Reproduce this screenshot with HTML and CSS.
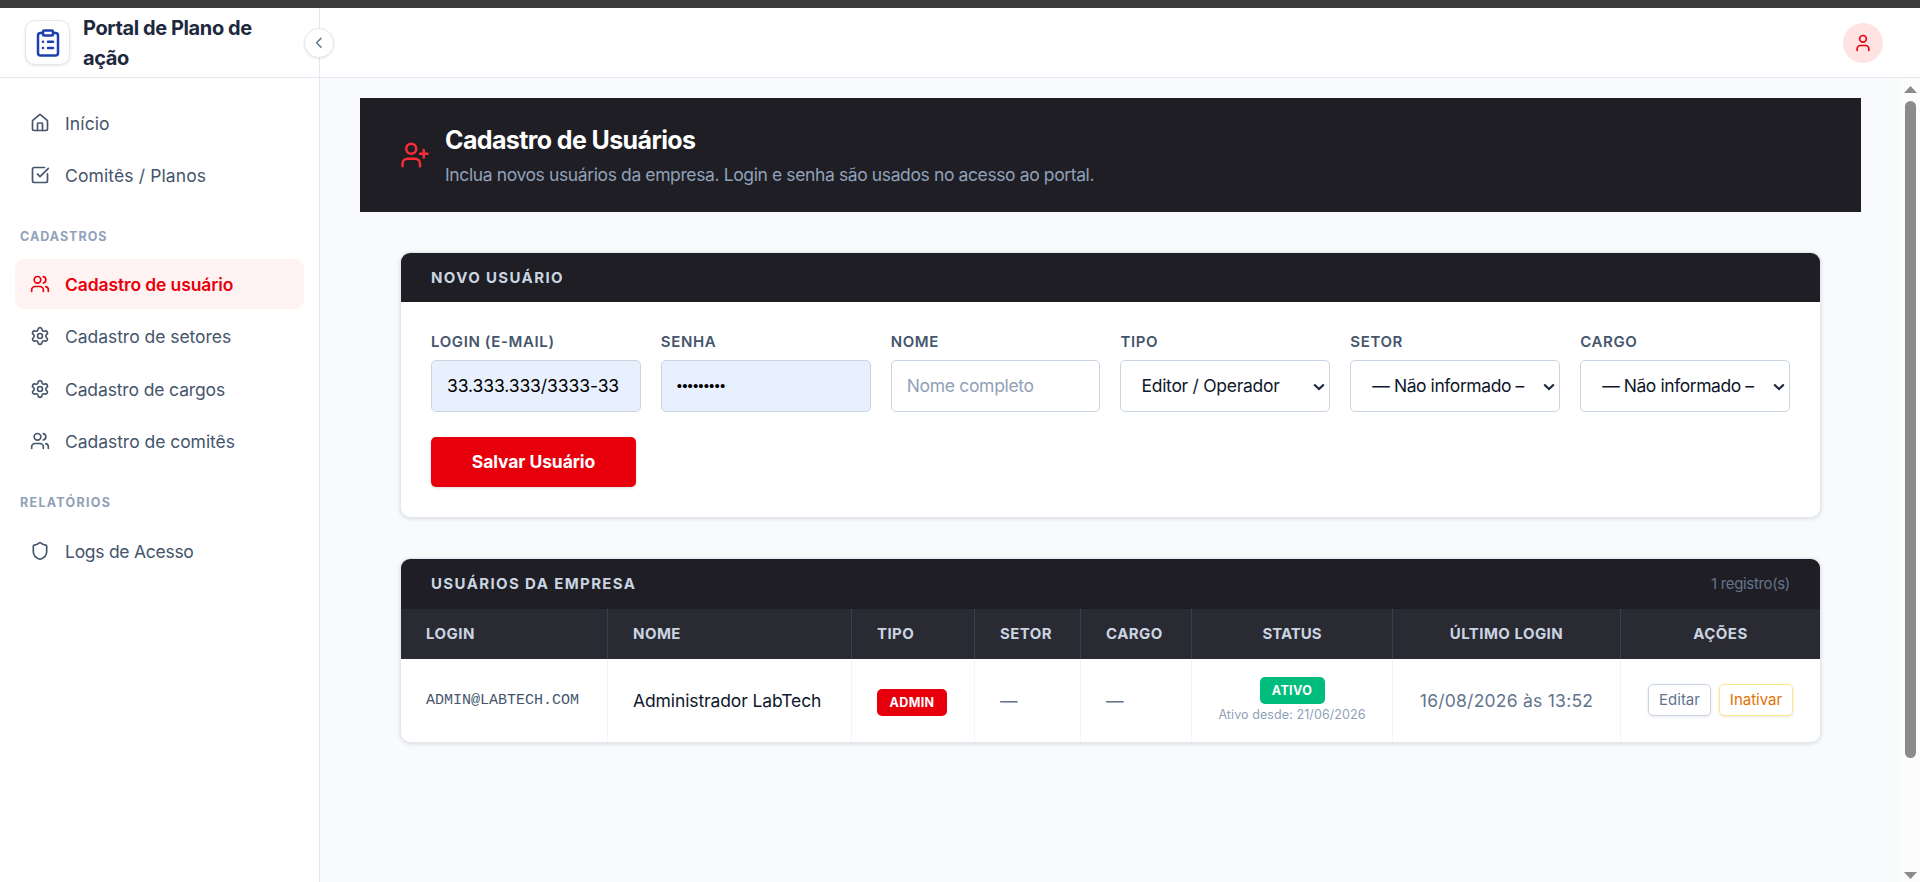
FILE: index.html
```html
<!DOCTYPE html>
<html lang="pt-BR">
<head>
<meta charset="utf-8">
<title>Portal de Plano de ação</title>
<link rel="stylesheet" href="styles.css">
</head>
<body>
<svg class="sprite" aria-hidden="true">
  <symbol id="i-clipboard" viewBox="0 0 24 24"><rect x="8" y="2" width="8" height="4" rx="1"/><path d="M16 4h2a2 2 0 0 1 2 2v14a2 2 0 0 1-2 2H6a2 2 0 0 1-2-2V6a2 2 0 0 1 2-2h2"/><path d="M12 11h4M12 16h4M8 11h.01M8 16h.01"/></symbol>
  <symbol id="i-home" viewBox="0 0 24 24"><path d="M15 21v-8a1 1 0 0 0-1-1h-4a1 1 0 0 0-1 1v8"/><path d="M3 10a2 2 0 0 1 .709-1.528l7-5.999a2 2 0 0 1 2.582 0l7 5.999A2 2 0 0 1 21 10v9a2 2 0 0 1-2 2H5a2 2 0 0 1-2-2z"/></symbol>
  <symbol id="i-check" viewBox="0 0 24 24"><path d="M21 10.5V19a2 2 0 0 1-2 2H5a2 2 0 0 1-2-2V5a2 2 0 0 1 2-2h12.5"/><path d="m9 11 3 3L22 4"/></symbol>
  <symbol id="i-users" viewBox="0 0 24 24"><path d="M16 21v-2a4 4 0 0 0-4-4H6a4 4 0 0 0-4 4v2"/><circle cx="9" cy="7" r="4"/><path d="M22 21v-2a4 4 0 0 0-3-3.87M16 3.13a4 4 0 0 1 0 7.75"/></symbol>
  <symbol id="i-gear" viewBox="0 0 24 24"><path d="M9.671 4.136a2.34 2.34 0 0 1 4.659 0 2.34 2.34 0 0 0 3.319 1.915 2.34 2.34 0 0 1 2.33 4.033 2.34 2.34 0 0 0 0 3.831 2.34 2.34 0 0 1-2.33 4.033 2.34 2.34 0 0 0-3.319 1.915 2.34 2.34 0 0 1-4.659 0 2.34 2.34 0 0 0-3.32-1.915 2.34 2.34 0 0 1-2.33-4.033 2.34 2.34 0 0 0 0-3.831A2.34 2.34 0 0 1 6.35 6.051a2.34 2.34 0 0 0 3.319-1.915"/><circle cx="12" cy="12" r="3"/></symbol>
  <symbol id="i-shield" viewBox="0 0 24 24"><path d="M20 13c0 5-3.5 7.5-7.66 8.95a1 1 0 0 1-.67-.01C7.5 20.5 4 18 4 13V6a1 1 0 0 1 1-1c2 0 4.5-1.2 6.24-2.72a1.17 1.17 0 0 1 1.52 0C14.51 3.81 17 5 19 5a1 1 0 0 1 1 1z"/></symbol>
  <symbol id="i-user" viewBox="0 0 24 24"><path d="M19 21v-2a4 4 0 0 0-4-4H9a4 4 0 0 0-4 4v2"/><circle cx="12" cy="7" r="4"/></symbol>
  <symbol id="i-user-plus" viewBox="0 0 24 24"><path d="M16 21v-2a4 4 0 0 0-4-4H6a4 4 0 0 0-4 4v2"/><circle cx="9" cy="7" r="4"/><path d="M19 8v6M22 11h-6"/></symbol>
  <symbol id="i-left" viewBox="0 0 24 24"><path d="m15 18-6-6 6-6"/></symbol>
  <symbol id="i-down" viewBox="0 0 12 8"><path d="m1.2 1.5 4.8 4.6 4.8-4.6"/></symbol>
</svg>
<div class="strip"></div>
<div class="app">
  <aside class="sidebar">
    <div class="brand">
      <span class="brand-logo"><svg class="icon icon-lg"><use href="#i-clipboard"/></svg></span>
      <h1 class="brand-name">Portal de Plano de ação</h1>
      <button class="collapse" aria-label="Recolher"><svg class="icon icon-xs"><use href="#i-left"/></svg></button>
    </div>
    <nav class="nav">
      <a class="nav-item wide"><svg class="icon"><use href="#i-home"/></svg>Início</a>
      <a class="nav-item wide"><svg class="icon"><use href="#i-check"/></svg>Comitês / Planos</a>
      <h2 class="nav-title">CADASTROS</h2>
      <a class="nav-item active"><svg class="icon"><use href="#i-users"/></svg>Cadastro de usuário</a>
      <a class="nav-item"><svg class="icon"><use href="#i-gear"/></svg>Cadastro de setores</a>
      <a class="nav-item snug"><svg class="icon"><use href="#i-gear"/></svg>Cadastro de cargos</a>
      <a class="nav-item"><svg class="icon"><use href="#i-users"/></svg>Cadastro de comitês</a>
      <h2 class="nav-title loose">RELATÓRIOS</h2>
      <a class="nav-item tight"><svg class="icon"><use href="#i-shield"/></svg>Logs de Acesso</a>
    </nav>
  </aside>
  <div class="main">
    <header class="topbar"><span class="avatar"><svg class="icon"><use href="#i-user"/></svg></span></header>
    <div class="viewport">
      <main class="content">
        <section class="banner">
          <svg class="icon icon-lg"><use href="#i-user-plus"/></svg>
          <div>
            <h2 class="banner-title">Cadastro de Usuários</h2>
            <p class="banner-text">Inclua novos usuários da empresa. Login e senha são usados no acesso ao portal.</p>
          </div>
        </section>

        <section class="card form-card">
          <header class="card-head"><h3 class="card-title">NOVO USUÁRIO</h3></header>
          <form class="form">
            <div class="fields">
              <label class="field"><span class="label">LOGIN (E-MAIL)</span><input class="control filled" type="text" value="33.333.333/3333-33"></label>
              <label class="field"><span class="label">SENHA</span><span class="control filled dots">•••••••••</span></label>
              <label class="field"><span class="label">NOME</span><input class="control" type="text" placeholder="Nome completo"></label>
              <label class="field"><span class="label">TIPO</span><span class="control select"><span class="select-value">Editor / Operador</span><svg class="chevron"><use href="#i-down"/></svg></span></label>
              <label class="field"><span class="label">SETOR</span><span class="control select"><span class="select-value none">— Não informado –</span><svg class="chevron"><use href="#i-down"/></svg></span></label>
              <label class="field"><span class="label">CARGO</span><span class="control select"><span class="select-value none">— Não informado –</span><svg class="chevron"><use href="#i-down"/></svg></span></label>
            </div>
            <button class="save" type="button">Salvar Usuário</button>
          </form>
        </section>

        <section class="card">
          <header class="card-head list-head"><h3 class="card-title">USUÁRIOS DA EMPRESA</h3><span class="count">1 registro(s)</span></header>
          <table class="table">
            <colgroup><col class="c-login"><col class="c-nome"><col class="c-tipo"><col class="c-setor"><col class="c-cargo"><col class="c-status"><col class="c-ultimo"><col class="c-acoes"></colgroup>
            <thead><tr><th>LOGIN</th><th>NOME</th><th>TIPO</th><th>SETOR</th><th>CARGO</th><th class="center flat">STATUS</th><th class="center">ÚLTIMO LOGIN</th><th class="center">AÇÕES</th></tr></thead>
            <tbody><tr>
              <td class="mono">ADMIN@LABTECH.COM</td>
              <td class="name">Administrador LabTech</td>
              <td class="type"><span class="badge admin">ADMIN</span></td>
              <td>—</td>
              <td>—</td>
              <td class="center"><div class="status"><span class="badge ok">ATIVO</span><span class="since">Ativo desde: 21/06/2026</span></div></td>
              <td class="center date">16/08/2026 às 13:52</td>
              <td class="center"><div class="actions"><button class="btn">Editar</button><button class="btn warn">Inativar</button></div></td>
            </tr></tbody>
          </table>
        </section>
      </main>
      <div class="scrollbar"><span class="arrow up"></span><span class="thumb"></span><span class="arrow down"></span></div>
    </div>
  </div>
</div>
</body>
</html>
```

FILE: styles.css
```css
*{box-sizing:border-box;margin:0;padding:0}
body{height:882px;overflow:hidden;display:flex;flex-direction:column;font-family:Inter,"Liberation Sans",sans-serif;font-size:17.5px;color:#0f172b;background:#f8fafc}
button,input{font:inherit;color:inherit}
.sprite{display:none}
.icon{width:20px;height:20px;flex:none;fill:none;stroke:currentColor;stroke-width:2;stroke-linecap:round;stroke-linejoin:round}
.icon-lg{width:30px;height:30px}
.icon-xs{width:17.5px;height:17.5px}
.strip{height:8px;flex:none;background:#3c3c3c}
.app{flex:1;min-height:0;display:flex}

.sidebar{width:320px;flex:none;background:#fff;border-right:1px solid #e2e8f0}
.brand{position:relative;height:70px;padding:0 50px 0 25px;display:flex;align-items:center;gap:13px;border-bottom:1px solid #e2e8f0}
.brand-logo{width:45px;height:45px;flex:none;display:grid;place-items:center;border:1px solid #e2e8f0;border-radius:10px;color:#1e40af;background:#fff;box-shadow:0 1px 3px rgba(0,0,0,.1)}
.brand-name{font-size:20px;line-height:30px;font-weight:700;letter-spacing:-.4px;color:#1d293d;padding-top:1px}
.collapse{position:absolute;top:20px;right:-15px;z-index:2;width:30px;height:30px;display:grid;place-items:center;border:1px solid #e2e8f0;border-radius:50%;background:#fff;color:#62748e;box-shadow:0 1px 3px rgba(0,0,0,.1)}
.nav{padding:20px 15px;display:flex;flex-direction:column;gap:2.5px}
.nav-item{height:50px;padding:0 15px;display:flex;align-items:center;gap:15px;border-radius:10px;color:#45556c;letter-spacing:-.04px}
.nav-item .icon{position:relative;top:-.5px}
.nav-item.wide{letter-spacing:.12px}
.nav-item.snug{letter-spacing:-.13px}
.nav-item.tight{letter-spacing:-.27px}
.nav-item.active{background:#fef2f2;color:#e7000b;font-weight:600;letter-spacing:-.12px}
.nav-title{height:53.5px;padding:23.5px 5px 0;font-size:12.5px;line-height:20px;font-weight:700;letter-spacing:1.01px;color:#90a1b9}
.nav-title.loose{height:54.5px;letter-spacing:1.3px}

.main{flex:1;min-width:0;display:flex;flex-direction:column}
.topbar{height:70px;flex:none;padding:0 37px;display:flex;align-items:center;justify-content:flex-end;background:#fff;border-bottom:1px solid #e2e8f0}
.avatar{width:40px;height:40px;display:grid;place-items:center;border-radius:50%;background:#ffe2e2;color:#e7000b}
.viewport{flex:1;min-height:0;display:flex}
.content{flex:1;padding:20px 40px}
.banner{height:114px;padding:0 40px 1px;display:flex;align-items:center;gap:15px;background:#1f1e24}
.banner>.icon{color:#fb2c36}
.banner-title{font-size:25px;line-height:35px;font-weight:700;letter-spacing:-.61px;color:#fff}
.banner-text{margin-top:4px;line-height:25px;letter-spacing:-.385px;color:#90a1b9}

.card{margin:42px 41px 0;background:#fff;border-radius:9px;overflow:hidden;box-shadow:0 0 0 1px #e2e8f0,0 1px 4px 1px rgba(0,0,0,.12)}
.banner+.card{margin-top:41px}
.card-head{height:49px;padding:0 30px;display:flex;align-items:center;justify-content:space-between;background:#1f1e24}
.list-head{height:50px;padding-bottom:1px}
.card-title{font-size:15px;font-weight:700;letter-spacing:1.38px;color:#cad5e2}
.count{font-size:15px;letter-spacing:-.34px;color:#62748e}
.form{padding:30px}
.fields{display:grid;grid-template-columns:repeat(6,minmax(0,1fr));gap:20px}
.field{display:flex;flex-direction:column;gap:8px}
.label{font-size:15px;line-height:20px;font-weight:600;letter-spacing:.62px;color:#45556c}
.control{width:100%;height:52px;padding:0 15px 1px;display:flex;align-items:center;border:1px solid #cad5e2;border-radius:5px;background:#fff;outline:0;letter-spacing:-.31px}
.control::placeholder{color:#90a1b9;opacity:1}
.filled{background:#e8f0fe;color:#000;letter-spacing:-.1px}
.dots{font-family:"Liberation Sans",sans-serif;font-size:15px;letter-spacing:.13px}
.select{padding:0 4px 1px 20px;gap:10px;color:#0f172b}
.select-value{flex:1;min-width:0;white-space:nowrap;letter-spacing:-.28px}
.select-value.none{letter-spacing:-.43px;padding-left:1px}
.chevron{width:12px;height:8px;flex:none;fill:none;stroke:#1d293d;stroke-width:2.2;position:relative;top:1px}
.save{margin-top:25px;width:205px;height:50px;padding-bottom:1px;display:block;border:0;border-radius:5px;background:#e7000b;color:#fff;font-weight:700;letter-spacing:-.1px;box-shadow:0 1px 3px rgba(0,0,0,.15)}

.table{width:100%;table-layout:fixed;border-collapse:separate;border-spacing:0}
.c-login{width:207px}.c-nome{width:244px}.c-tipo{width:123px}.c-setor{width:106px}
.c-cargo{width:111px}.c-status{width:201px}.c-ultimo{width:228px}.c-acoes{width:199px}
.table th{height:50px;padding:0 0 1px 25px;text-align:left;font-size:15px;font-weight:700;letter-spacing:.45px;color:#cad5e2;background:#2a2a33;border-right:1px solid #314158}
.table td{height:83px;padding:0 0 0 25px;vertical-align:middle;white-space:nowrap;color:#62748e;border-right:1px solid #f1f5f9}
.table th:last-child,.table td:last-child{border-right:0}
.table .center{padding-left:0;text-align:center}
.table .flat{letter-spacing:0}
.table .mono{font:15px "Liberation Mono",monospace;color:#45556c;padding-bottom:0}
.table .name{color:#0f172b;letter-spacing:-.11px}
.table .type{padding-top:4px}
.table .date{letter-spacing:.24px}
.badge{height:27px;display:inline-flex;align-items:center;justify-content:center;border-radius:5px;font-size:12.5px;font-weight:700;letter-spacing:.35px;color:#fff}
.admin{width:70px;background:#e7000b}
.ok{width:65px;background:#00bc7d}
.status{display:flex;flex-direction:column;align-items:center;gap:1px}
.since{font-size:12.5px;line-height:19px;letter-spacing:.09px;color:#90a1b9}
.actions{display:flex;justify-content:center;gap:8px;padding-bottom:1px}
.btn{height:32px;width:63px;padding-bottom:1px;border:1px solid #cad5e2;border-radius:5px;background:#fff;font-size:15px;color:#62748e;box-shadow:0 1px 3px rgba(0,0,0,.1)}
.btn.warn{width:74px;border-color:#fee685;color:#e17100}

.scrollbar{width:19px;flex:none;padding:8px 0 3px 3px;display:flex;flex-direction:column;background:#fcfcfc}
.arrow{width:13px;height:7px;background:#8b8b8b}
.up{clip-path:polygon(50% 0,100% 100%,0 100%)}
.down{margin-top:auto;clip-path:polygon(0 0,100% 0,50% 100%)}
.thumb{width:11px;height:657px;margin:8px 0 0 1px;border-radius:6px;background:#8b8b8b}
```
